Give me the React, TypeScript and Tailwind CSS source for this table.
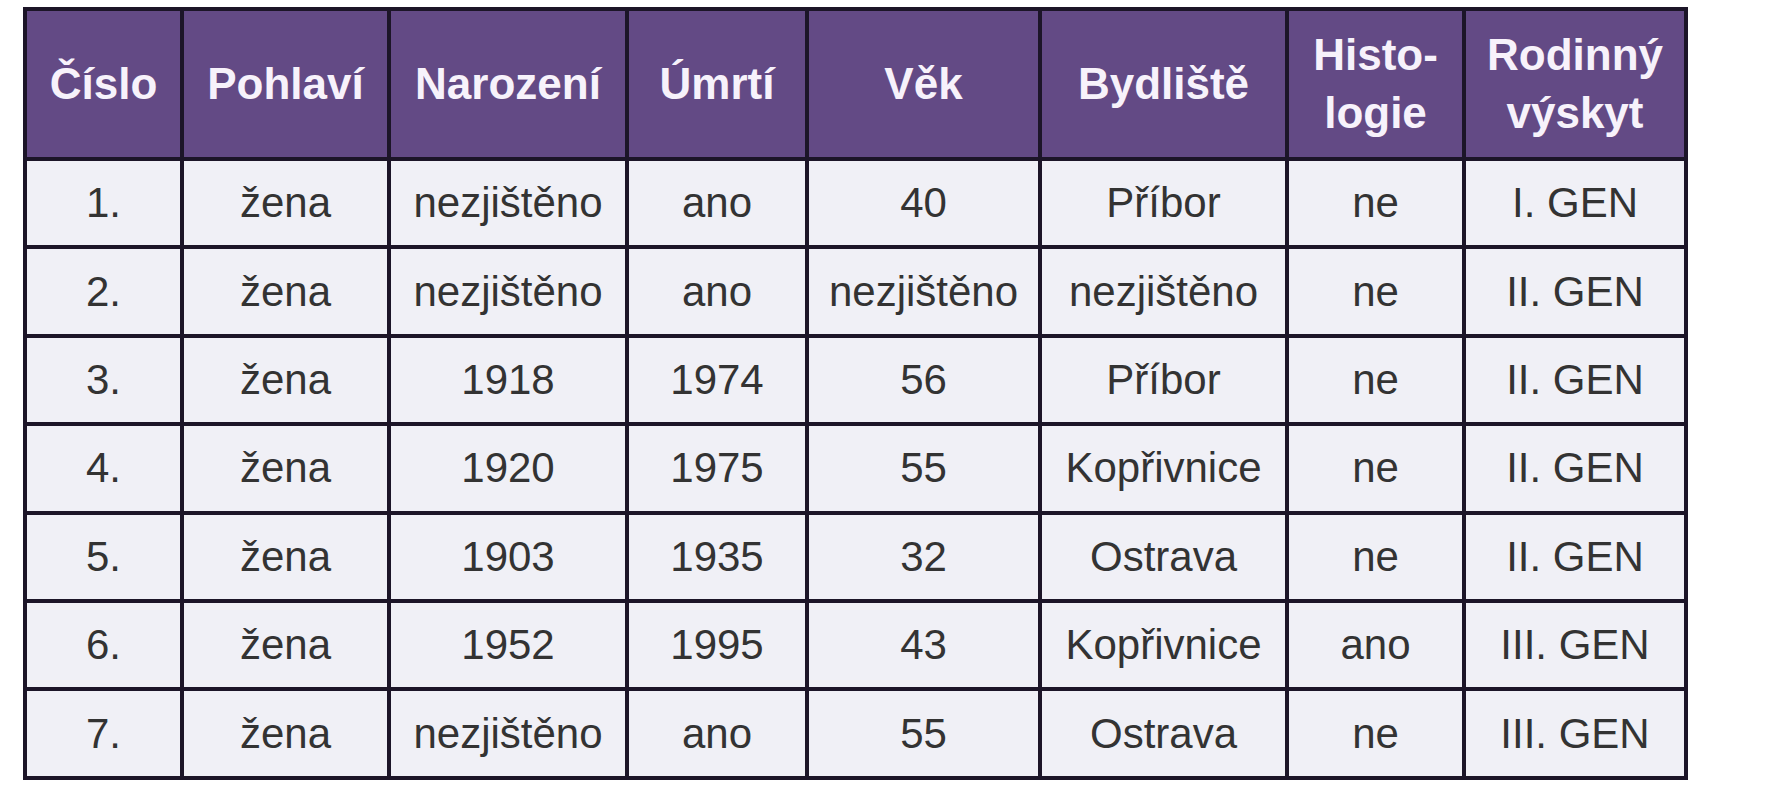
const headers: string[][] = [
  ["Číslo"],
  ["Pohlaví"],
  ["Narození"],
  ["Úmrtí"],
  ["Věk"],
  ["Bydliště"],
  ["Histo-", "logie"],
  ["Rodinný", "výskyt"],
];

const colWidths = [157, 207, 238, 180, 233, 247, 177, 222];

const rows: string[][] = [
  ["1.", "žena", "nezjištěno", "ano", "40", "Příbor", "ne", "I. GEN"],
  ["2.", "žena", "nezjištěno", "ano", "nezjištěno", "nezjištěno", "ne", "II. GEN"],
  ["3.", "žena", "1918", "1974", "56", "Příbor", "ne", "II. GEN"],
  ["4.", "žena", "1920", "1975", "55", "Kopřivnice", "ne", "II. GEN"],
  ["5.", "žena", "1903", "1935", "32", "Ostrava", "ne", "II. GEN"],
  ["6.", "žena", "1952", "1995", "43", "Kopřivnice", "ano", "III. GEN"],
  ["7.", "žena", "nezjištěno", "ano", "55", "Ostrava", "ne", "III. GEN"],
];

export default function App() {
  return (
    <div className="min-h-[800px] w-full bg-white pl-[23px] pt-[7px] font-['Liberation_Sans',Arial,sans-serif]">
      <table className="table-fixed border-collapse border-[4px] border-[#1c1528]">
        <colgroup>
          {colWidths.map((w, i) => (
            <col key={i} style={{ width: w }} />
          ))}
        </colgroup>
        <thead>
          <tr>
            {headers.map((lines, i) => (
              <th
                key={i}
                className="h-[150px] border-[4px] border-[#1c1528] bg-[#634a85] p-0 text-center align-middle text-[44px] font-bold leading-[58px] text-[#f7f2fb]"
              >
                {lines.map((line) => (
                  <div key={line}>{line}</div>
                ))}
              </th>
            ))}
          </tr>
        </thead>
        <tbody>
          {rows.map((row, r) => (
            <tr key={r}>
              {row.map((cell, c) => (
                <td
                  key={c}
                  className="h-[88.4px] border-[4px] border-[#1c1528] bg-[#f0f0f6] p-0 text-center align-middle text-[42px] leading-none whitespace-nowrap text-[#333333]"
                >
                  {cell}
                </td>
              ))}
            </tr>
          ))}
        </tbody>
      </table>
    </div>
  );
}
